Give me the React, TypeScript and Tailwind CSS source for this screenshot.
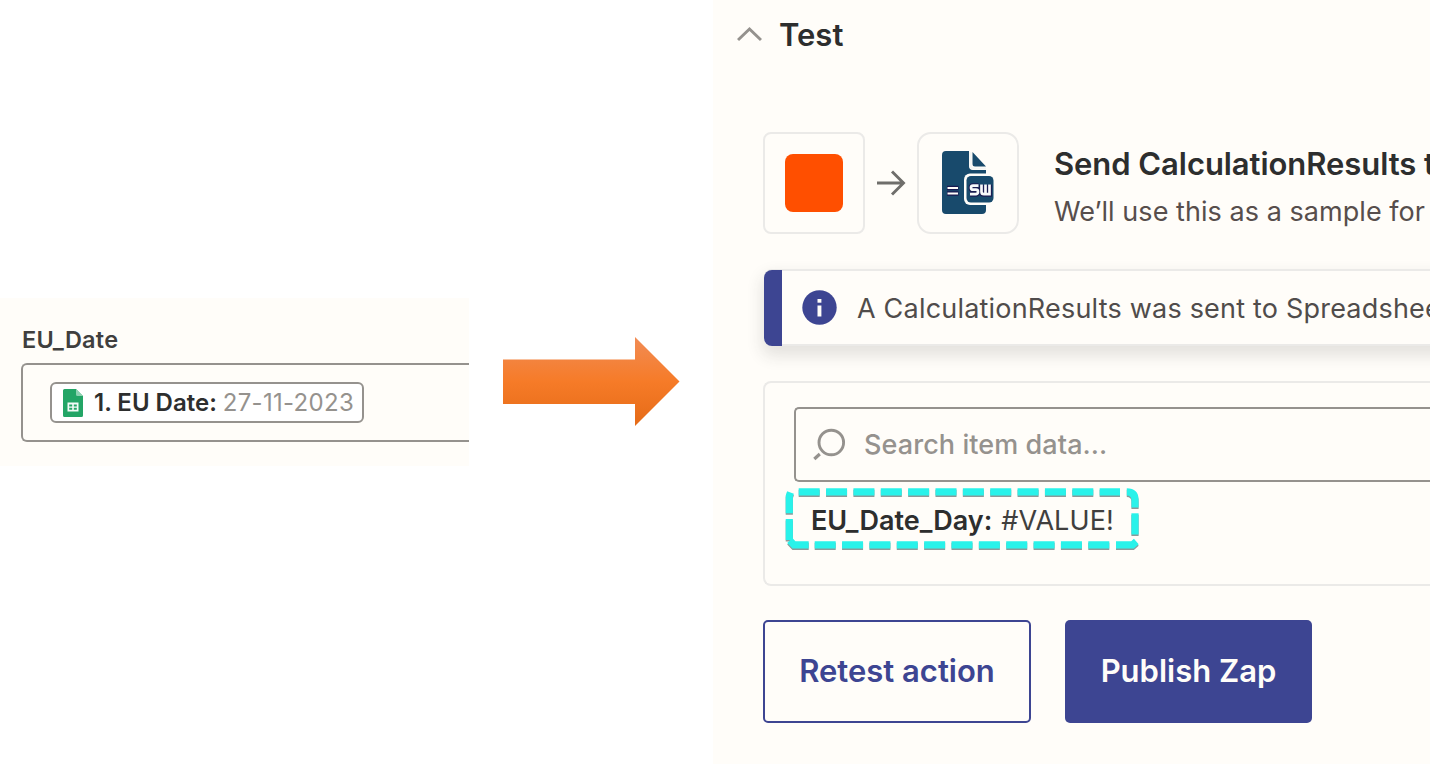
import React from "react";

const SheetsIcon = () => (
    <svg width="20" height="28" viewBox="0 0 20 28" className="shrink-0">
        <path d="M1.500 0H13l7 7v19.500a1.500 1.500 0 0 1-1.500 1.500h-17A1.500 1.500 0 0 1 0 26.500v-25A1.500 1.500 0 0 1 1.500 0z" fill="#23a566" />
        <path d="M13 0l7 7h-5.500A1.500 1.500 0 0 1 13 5.500z" fill="#8ed1b1" />
        <rect x="4.500" y="13.500" width="11" height="9" fill="#f3fbf7" />
        <path d="M6.200 15.500h3v2h-3zM10.800 15.500h3v2h-3zM6.200 18.800h3v2h-3zM10.800 18.800h3v2h-3z" fill="#23a566" />
    </svg>
);

const BigArrow = () => (
    <svg width="177" height="89" viewBox="0 0 177 89" className="shrink-0">
        <defs>
            <linearGradient id="arrowFill" x1="0" y1="0" x2="0" y2="1">
                <stop offset="0" stopColor="#f18c55" />
                <stop offset="0.5" stopColor="#f67b28" />
                <stop offset="1" stopColor="#e56b17" />
            </linearGradient>
        </defs>
        <path d="M0 22.500h132V0l44.500 44.500L132 89V67H0z" fill="url(#arrowFill)" />
    </svg>
);

const SpreadsheetWebIcon = () => (
    <svg width="54" height="64" viewBox="0 0 54 64" className="ml-[2px]">
        <path d="M4 0h23v15a4 4 0 0 0 4 4h13v40a4 4 0 0 1-4 4H4a4 4 0 0 1-4-4V4a4 4 0 0 1 4-4z" fill="#184a6c" />
        <path d="M30.500 1L44 15.500H33a2.500 2.500 0 0 1-2.500-2.500z" fill="#184a6c" />
        <path d="M28.500 1v13.500a3 3 0 0 0 3 3H44" fill="none" stroke="#f4f5f4" strokeWidth="2.200" />
        <rect x="22" y="22.500" width="31" height="31.500" rx="6" fill="#fffdf9" />
        <rect x="24.500" y="25" width="27" height="26.500" rx="4.500" fill="#184a6c" />
        <path d="M5 37h11.500M5 42.500h11.500" stroke="#18194f" strokeWidth="4.500" />
        <path d="M5.500 37h10.500M5.500 42.500h10.500" stroke="#fffdf9" strokeWidth="2.200" />
        <path d="M36.500 34.700h-5.500q-2 0-2 2t2 2h3q2 0 2 2t-2 2.500h-6M39.500 33.700v7q0 2.500 2.500 2.500h5.500v-9.500M43.500 34v9" fill="none" stroke="#1b1d52" strokeWidth="5" />
        <path d="M36.500 34.700h-5.500q-2 0-2 2t2 2h3q2 0 2 2t-2 2.500h-6M39.500 33.500v7.200q0 2.500 2.500 2.500h5.500v-9.700M43.500 33.500v9.500" fill="none" stroke="#f8fafb" strokeWidth="2.700" />
    </svg>
);

const InfoIcon = () => (
    <svg width="35" height="35" viewBox="0 0 35 35" className="shrink-0">
        <circle cx="17.500" cy="17.500" r="17.200" fill="#3d4592" />
        <rect x="15.500" y="9" width="3.900" height="3.700" fill="#fffdf9" />
        <rect x="15.500" y="15.500" width="3.900" height="11" fill="#fffdf9" />
    </svg>
);

const SearchIcon = () => (
    <svg width="34" height="34" viewBox="0 0 34 34" fill="none" stroke="#95928e" strokeWidth="2.900" className="shrink-0">
        <circle cx="18.300" cy="14.500" r="12.300" />
        <path d="M1.300 31l5.500-5" strokeWidth="3.200" />
    </svg>
);

const DashedOutline = () => (
    <>
        <path d="M16.700 7.900H338" strokeDasharray="21 6.360" />
        <path d="M344.800 7.900Q353 7.900 353 16V23.400" />
        <path d="M353 29.300V50.500" />
        <path d="M354.300 57.500L350.500 60.900H334" />
        <path d="M327.300 60.900H32" strokeDasharray="21 6.360" />
        <path d="M26.700 60.900H12L7.800 56.500" />
        <path d="M7.300 56V35" />
        <path d="M7.300 29.300V12L8.500 8.500" />
    </>
);

// Dashed marker drawn over the result row
const Highlight = () => (
    <svg width="362" height="72" viewBox="0 0 362 72" fill="none" strokeWidth="7.200" className="absolute left-[17px] top-[101px] pointer-events-none">
        <g stroke="#8c9a9a" transform="translate(0 1.500)">
            <DashedOutline />
        </g>
        <g stroke="#29f2ea">
            <DashedOutline />
        </g>
    </svg>
);

const FieldPreview = () => (
    <div className="w-[469px] h-[168px] bg-[#fffdf9] pt-[26px] pl-[21px] overflow-hidden">
        <div className="h-[39px] pl-px pt-px text-[23.5px] leading-[30px] tracking-[0.25px] font-semibold text-[#403f3e]">EU_Date</div>
        <div className="flex items-center h-[79px] pl-[27px] border-2 border-r-0 border-[#95928e] rounded-l-[6px]">
            <div className="flex items-center w-[314px] h-[41px] pl-[11px] border-2 border-[#95928e] rounded-[6px] bg-white text-[24px] whitespace-nowrap">
                <SheetsIcon />
                <span className="ml-[11px] font-semibold text-[#2d2e2e]">1. EU Date:</span>
                <span className="ml-[6px] tracking-[0.3px] text-[#95928e]">27-11-2023</span>
            </div>
        </div>
    </div>
);

const TestPanel = () => (
    <div className="flex flex-col w-[717px] h-[764px] shrink-0 bg-[#fffdf9] pl-[50px] overflow-hidden whitespace-nowrap">
        <div className="flex items-center h-[70px] -ml-[26px] shrink-0">
            <svg width="25" height="16" viewBox="0 0 25 16" fill="none" stroke="#95928e" strokeWidth="3" className="-mt-[3px]">
                <path d="M1 14L12.500 3L24 14" />
            </svg>
            <h2 className="ml-[17px] text-[31px] font-semibold text-[#2d2e2e]">Test</h2>
        </div>

        <div className="flex items-center h-[102px] mt-[62px] shrink-0">
            <div className="flex items-center justify-center w-[102px] h-[102px] border-2 border-[#ebeae8] rounded-[8px] shrink-0">
                <div className="w-[58px] h-[58px] rounded-[8px] bg-[#ff4f00]" />
            </div>
            <svg width="30" height="28" viewBox="0 0 30 28" fill="none" stroke="#6f6e6b" strokeWidth="2.900" className="ml-[12px] mr-[10px] shrink-0">
                <path d="M0 14H27M15 2.500L26.500 14L15 25.500" />
            </svg>
            <div className="flex items-center justify-center w-[102px] h-[102px] border-2 border-[#ebeae8] rounded-[14px] shrink-0">
                <SpreadsheetWebIcon />
            </div>
            <div className="ml-[35px] pt-[8px]">
                <div className="text-[31px] leading-[48px] tracking-[-0.06px] font-semibold text-[#2d2e2e]">Send CalculationResults t</div>
                <div className="text-[27px] leading-[47px] tracking-[0.05px] text-[#574e4c]">We’ll use this as a sample for</div>
            </div>
        </div>

        <div className="flex items-center h-[77px] mt-[35px] ml-px -mr-[30px] shrink-0 rounded-l-[8px] border-y-2 border-[#ebeae8] bg-[#fffdf9] shadow-[0_8px_16px_2px_rgba(45,46,46,0.13)]">
            <div className="w-[18px] h-[76px] rounded-l-[8px] bg-[#3d4592] shrink-0" />
            <div className="flex items-center ml-[20px]">
                <InfoIcon />
                <span className="ml-[20px] pt-[3px] text-[27px] tracking-[0.2px] text-[#504c4b]">A CalculationResults was sent to Spreadshee</span>
            </div>
        </div>

        <div className="relative h-[205px] mt-[35px] pt-[24px] pl-[29px] shrink-0 border-2 border-r-0 border-[#ebeae8] rounded-l-[8px]">
            <div className="flex items-center h-[75px] pl-[17px] border-2 border-r-0 border-[#95928e] rounded-l-[5px]">
                <SearchIcon />
                <span className="ml-[17px] pt-[2px] text-[27px] tracking-[0.08px] font-medium text-[#95928e]">Search item data...</span>
            </div>
            <div className="flex h-[78px] items-center pl-[17px] text-[27px]">
                <span className="font-semibold text-[#2d2e2e]">EU_Date_Day:</span>
                <span className="ml-[9px] tracking-[0.1px] text-[#403f3e]">#VALUE!</span>
            </div>
            <Highlight />
        </div>

        <div className="flex gap-[34px] mt-[34px] shrink-0 text-[31px] font-semibold">
            <button type="button" className="w-[268px] h-[103px] border-2 border-[#3d4592] rounded-[5px] text-[#3d4592]">Retest action</button>
            <button type="button" className="w-[247px] h-[103px] rounded-[5px] bg-[#3d4592] text-[#fffdf9]">Publish Zap</button>
        </div>
    </div>
);

export default function App() {
    return (
        <div className="flex items-center w-[1430px] h-[764px] bg-white overflow-hidden font-['Inter',sans-serif]">
            <FieldPreview />
            <div className="flex justify-center w-[244px] pl-px pb-[2px]">
                <BigArrow />
            </div>
            <TestPanel />
        </div>
    );
}
